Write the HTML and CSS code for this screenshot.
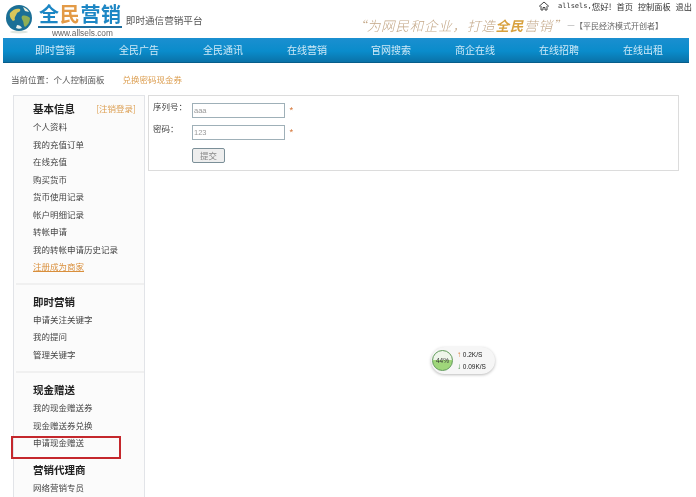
FILE: index.html

```html
<!DOCTYPE html>
<html lang="zh-CN">

<head>
    <meta charset="UTF-8">
    <title>全民营销</title>
    <link rel="stylesheet" href="styles.css">
</head>

<body>
    <!-- Header -->
    <div class="header">
        <div class="logo">
            <svg class="globe" width="28" height="30" viewBox="0 0 28 30">
                <ellipse cx="14" cy="28" rx="9" ry="1.5" fill="#dfe6e0" />
                <circle cx="14" cy="14" r="13" fill="#1b6f96" />
                <path d="M5 9c3-4 7-5 10-4 1 2-1 3-3 4-1 3-3 4-2 7l-2 1C6 15 4 12 5 9z" fill="#d9c65a" />
                <path d="M17 12c3-1 6 0 8 2 0 4-2 7-5 9-2-2-1-4-2-6-1-2-2-3-1-5z" fill="#8fae55" />
                <path d="M12 21c2 0 4 1 5 3-2 1-4 1-6 0z" fill="#e9efe9" />
                <path d="M18 3c3 1 5 3 6 5l-4-1z" fill="#f3f1df" />
            </svg>
            <div class="logo-text">
                <div class="logo-name">全<span class="orange">民</span>营销</div>
                <div class="logo-url">www.allsels.com</div>
            </div>
            <div class="logo-slogan">即时通信营销平台</div>
        </div>

        <div class="header-right">
            <div class="user-links">
                <svg class="home-icon" width="12" height="10" viewBox="0 0 12 10">
                    <path d="M1 5.5 6 1l5 4.5M3 5v4h2V6.5h2V9h2V5" fill="none" stroke="#444" stroke-width="1" />
                </svg>
                <span class="user-name">allsels,</span><span>您好!</span>
                <a>首页</a><a>控制面板</a><a>退出</a>
            </div>
            <div class="motto">
                <span class="motto-big">“为网民和企业，打造<span class="motto-gold">全民</span>营销”</span>
                <span class="motto-small">—【平民经济模式开创者】</span>
            </div>
        </div>
    </div>

    <!-- Nav -->
    <div class="nav">
        <a>即时营销</a>
        <a>全民广告</a>
        <a>全民通讯</a>
        <a>在线营销</a>
        <a>官网搜索</a>
        <a>商企在线</a>
        <a>在线招聘</a>
        <a>在线出租</a>
    </div>

    <!-- Breadcrumb -->
    <div class="crumb">
        <span>当前位置：个人控制面板</span>
        <span class="crumb-page">兑换密码现金券</span>
    </div>

    <div class="content">
        <!-- Sidebar -->
        <div class="sidebar">
            <div class="side-group first">
                <div class="side-title">基本信息 <a class="logout">[注销登录]</a></div>
                <a class="side-link">个人资料</a>
                <a class="side-link">我的充值订单</a>
                <a class="side-link">在线充值</a>
                <a class="side-link">购买货币</a>
                <a class="side-link">货币使用记录</a>
                <a class="side-link">帐户明细记录</a>
                <a class="side-link">转帐申请</a>
                <a class="side-link">我的转帐申请历史记录</a>
                <a class="side-link merchant">注册成为商家</a>
            </div>
            <div class="side-group">
                <div class="side-title">即时营销</div>
                <a class="side-link">申请关注关键字</a>
                <a class="side-link">我的提问</a>
                <a class="side-link">管理关键字</a>
            </div>
            <div class="side-group plain">
                <div class="side-title">现金赠送</div>
                <a class="side-link">我的现金赠送券</a>
                <a class="side-link">现金赠送券兑换</a>
                <a class="side-link">申请现金赠送</a>
            </div>
            <div class="side-group plain last">
                <div class="side-title">营销代理商</div>
                <a class="side-link">网络营销专员</a>
            </div>
        </div>

        <!-- Redeem form -->
        <form class="panel">
            <div class="field">
                <label for="serial">序列号：</label>
                <input type="text" id="serial" value="aaa">
                <span class="star">*</span>
            </div>
            <div class="field">
                <label for="password">密码：</label>
                <input type="text" id="password" value="123">
                <span class="star">*</span>
            </div>
            <button type="button">提交</button>
        </form>
    </div>

    <!-- Red annotation box -->
    <div class="marker"></div>

    <!-- Speed widget -->
    <div class="speed">
        <div class="speed-ball">44%</div>
        <div class="speed-rates">
            <div><span class="up">↑</span> 0.2K/S</div>
            <div><span class="down">↓</span> 0.09K/S</div>
        </div>
    </div>
</body>

</html>
```

FILE: styles.css

```css
html, body {
    height: 497px;
    overflow: hidden;
}

body {
    position: relative;
    margin: 0;
    background-color: #fff;
    color: #444;
    font-family: "Noto Sans CJK SC", "Liberation Sans", sans-serif;
    font-size: 8.5px;
    filter: blur(0.3px);
}

/* Header */
.header {
    display: flex;
    justify-content: space-between;
    height: 38px;
    padding-left: 5px;
    padding-right: 4px;
}

.logo {
    display: flex;
    align-items: flex-start;
}

.globe {
    margin-top: 4px;
}

.logo-text {
    margin-left: 5px;
}

.logo-name {
    height: 26px;
    padding-left: 1px;
    border-bottom: 2px solid #1f6e9e;
    color: #1c86c4;
    font-size: 20px;
    font-weight: 700;
    line-height: 27px;
    letter-spacing: 0.7px;
}

.orange {
    color: #e39a46;
}

.logo-url {
    padding-left: 14px;
    color: #666;
    font-family: "Liberation Sans", sans-serif;
    font-size: 8.3px;
    line-height: 10px;
}

.logo-slogan {
    margin-top: 14px;
    margin-left: 4px;
    color: #555;
    font-size: 9.6px;
    line-height: 13px;
}

.header-right {
    display: flex;
    flex-direction: column;
    align-items: flex-end;
}

.user-links {
    display: flex;
    align-items: center;
    height: 11px;
    color: #333;
}

.user-links a {
    margin-left: 5px;
    font-size: 8.2px;
}

.home-icon {
    margin-right: 8px;
}

.user-name {
    font-family: "DejaVu Sans Mono", monospace;
    font-size: 7px;
}

.motto {
    display: flex;
    align-items: center;
    height: 20px;
    margin-top: 4px;
    margin-right: 29px;
    white-space: nowrap;
}

.motto-big {
    color: #c4a888;
    font-family: "Noto Sans CJK SC", serif;
    font-size: 13.5px;
    font-style: italic;
    font-weight: 300;
    letter-spacing: 0.8px;
}

.motto-gold {
    color: #d8a13e;
    font-weight: 700;
}

.motto-small {
    color: #666;
    font-size: 8px;
}

/* Nav */
.nav {
    display: flex;
    width: 686px;
    height: 25px;
    margin-left: 3px;
    padding-left: 10px;
    background: linear-gradient(#1b8fd0, #0a8ccb 55%, #0a72a8);
    border-bottom: 1px solid #075d8a;
    box-sizing: border-box;
}

.nav a {
    width: 84px;
    color: #cfe9f7;
    font-size: 10px;
    line-height: 24px;
    text-align: center;
}

/* Breadcrumb */
.crumb {
    display: flex;
    height: 32px;
    padding-left: 11px;
    color: #555;
    line-height: 33px;
}

.crumb-page {
    margin-left: 18px;
    color: #dc9f52;
}

/* Content */
.content {
    display: flex;
    align-items: flex-start;
    padding-left: 13px;
    gap: 3px;
}

.sidebar {
    width: 132px;
    height: 402px;
    background-color: #fbfbfb;
    border: 1px solid #e2e4e8;
    border-bottom: none;
    box-sizing: border-box;
}

.side-group {
    margin-left: 2px;
    padding: 7px 0 8px 17px;
    border-bottom: 2px solid #f0f0f0;
}

.side-group.first {
    padding-top: 3px;
    padding-bottom: 7px;
}

.side-group.plain {
    border-bottom: none;
}

.side-group.last {
    padding-top: 0;
}

.side-title {
    display: flex;
    justify-content: space-between;
    height: 19px;
    padding-right: 8px;
    color: #222;
    font-size: 10.5px;
    font-weight: 700;
    line-height: 19px;
}

.logout {
    color: #dc9f52;
    font-size: 8.5px;
    font-weight: 400;
}

.side-link {
    display: block;
    height: 17.5px;
    line-height: 17.5px;
    white-space: nowrap;
}

.merchant {
    color: #d98f3c;
    text-decoration: underline;
}

/* Form panel */
.panel {
    width: 531px;
    height: 76px;
    padding-top: 3px;
    background-color: #fff;
    border: 1px solid #dcdcdc;
    box-sizing: border-box;
}

.field {
    display: flex;
    align-items: flex-start;
    height: 22px;
    padding-left: 4px;
}

.field label {
    width: 39px;
    line-height: 14px;
}

.field input {
    width: 93px;
    height: 15px;
    margin: 4px 0 0;
    padding: 0 1px;
    background-color: #fff;
    border: 1px solid #9fb0b8;
    box-sizing: border-box;
    color: #999;
    font-family: "Liberation Sans", sans-serif;
    font-size: 7.5px;
}

.star {
    margin-left: 4px;
    margin-top: 5px;
    color: #d9824a;
    font-size: 10px;
    line-height: 14px;
}

.panel button {
    display: block;
    width: 33px;
    height: 15px;
    margin: 5px 0 0 43px;
    padding: 0;
    background-color: #eeeeee;
    border: 1px solid #7b8f98;
    border-radius: 2px;
    color: #888;
    font-family: inherit;
    font-size: 8.5px;
    line-height: 13px;
}

/* Overlays */
.marker {
    position: absolute;
    left: 11px;
    top: 436px;
    width: 110px;
    height: 23px;
    border: 2px solid #c4272c;
    box-sizing: border-box;
}

.speed {
    position: absolute;
    left: 431px;
    top: 347px;
    display: flex;
    align-items: center;
    width: 64px;
    height: 27px;
    background-color: #f6f6f6;
    border-radius: 14px;
    box-shadow: 0 1px 3px #bbb;
}

.speed-ball {
    width: 21px;
    height: 21px;
    margin-left: 1px;
    background: linear-gradient(#eef5ea 45%, #9fd67a 45%);
    border: 1px solid #5f9a58;
    border-radius: 50%;
    box-sizing: border-box;
    color: #333;
    font-family: "Liberation Sans", sans-serif;
    font-size: 6.5px;
    line-height: 19px;
    text-align: center;
}

.speed-rates {
    margin-left: 4px;
    color: #222;
    font-family: "Liberation Sans", sans-serif;
    font-size: 6.5px;
    line-height: 12px;
    white-space: nowrap;
}

.up {
    color: #d9803f;
    font-size: 8px;
    font-weight: 700;
}

.down {
    color: #3f8a3f;
    font-size: 8px;
    font-weight: 700;
}
```
